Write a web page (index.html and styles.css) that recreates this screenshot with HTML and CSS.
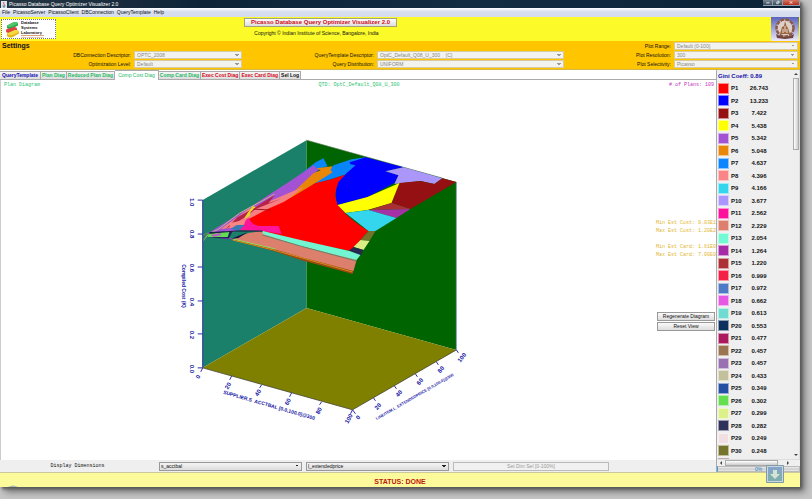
FILE: index.html
```
<!DOCTYPE html>
<html lang="en">
<head>
<meta charset="utf-8">
<title>Picasso Database Query Optimizer Visualizer 2.0</title>
<link rel="stylesheet" href="styles.css">
</head>
<body>
<div class="window">
  <header class="titlebar">
    <svg class="java" viewBox="0 0 6 7" aria-hidden="true"><path d="M0 0h6v7H0z" fill="#dfe5ec"/><path d="M3 1q-1 1 0 2t0 1.500" stroke="#d33" fill="none" stroke-width=".8"/><path d="M1.500 5h3M2 6h2" stroke="#357" stroke-width=".7"/></svg>
    <span class="title">Picasso Database Query Optimizer Visualizer 2.0</span>
    <div class="controls">
      <button aria-label="Minimize"><svg viewBox="0 0 9 6"><path d="M3 3.500h4" stroke="#fff"/></svg></button>
      <button aria-label="Restore"><svg viewBox="0 0 9 6"><path d="M3.500 2.500h2v2h-2zM4.500 1.500h2v2" stroke="#fff" fill="none" stroke-width=".8"/></svg></button>
      <button class="close" aria-label="Close"><svg viewBox="0 0 16 6"><path d="M6.500 1.500l3 3m0-3l-3 3" stroke="#fff"/></svg></button>
    </div>
  </header>
  <nav class="menu">
    <a href="#">File</a><a href="#">PicassoServer</a><a href="#">PicassoClient</a><a href="#">DBConnection</a><a href="#">QueryTemplate</a><a href="#">Help</a>
  </nav>
  <section class="banner">
    <div class="lab">
      <svg viewBox="0 0 15 18" aria-hidden="true">
        <path d="M2 5.500l7-3.500q4-.5 4 1.500v2L6 9q-4 .5-4-1.500z" fill="#2da84f"/><path d="M2 5.500l7-3.500q4-.5 4 1.500L6 7Q2 7.500 2 5.500" fill="#51c46c"/>
        <path d="M1 9.500l8-2.500q3 0 3 2v1L5 13q-4 0-4-2z" fill="#df4540"/>
        <path d="M2 13.500l8-3.500q4 0 4 2v1.500L7 17.500q-5 0-5-2z" fill="#e4b81d"/><path d="M2 13.500l8-3.500q4 0 4 2l-7 3q-5 0-5-1.500" fill="#f4da42"/>
      </svg>
      <div class="labname"><span>Database</span><span>Systems</span><span>Laboratory</span><small>Indian Institute of Science</small></div>
    </div>
    <div class="product">
      <button>Picasso Database Query Optimizer Visualizer 2.0</button>
      <p>Copyright © Indian Institute of Science, Bangalore, India</p>
    </div>
    <svg class="crest" viewBox="0 0 28 24" aria-hidden="true">
      <defs><linearGradient id="sky" x2="0" y2="1"><stop stop-color="#5964bd"/><stop offset="1" stop-color="#eee9fb"/></linearGradient></defs>
      <path d="M0 0h28v24H0z" fill="url(#sky)"/>
      <circle cx="14" cy="11" r="8.500" fill="#ddd0cb" stroke="#8b5b45" stroke-width="2.500" stroke-dasharray="4 1"/>
      <path d="M9 17l2-7 2-1 1-5 1.500 5 1.500 2 2 6z" fill="#9f6541"/><path d="M12 16v-4m2 3V9m2 7v-4" stroke="#ede0d5"/>
      <path d="M5 17l4 2 5 1 5-1 4-2-1 4-8 1-8-1z" fill="#704438"/>
    </svg>
  </section>
  <section class="settings">
    <h2>Settings</h2>
    <label class="c1 r2" for="db">DBConnection Descriptor:</label><select class="c2 r2" id="db" disabled><option>OPTC_2008</option></select>
    <label class="c1 r3" for="opt">Optimization Level:</label><select class="c2 r3" id="opt" disabled><option>Default</option></select>
    <label class="c3 r2" for="qt">QueryTemplate Descriptor:</label><select class="c4 r2" id="qt" disabled><option>OptC_Default_Q08_U_300 &nbsp;&nbsp; (C)</option></select>
    <label class="c3 r3" for="qd">Query Distribution:</label><select class="c4 r3" id="qd" disabled><option>UNIFORM</option></select>
    <label class="c5 r1" for="pr">Plot Range:</label><select class="c6 r1" id="pr" disabled><option>Default (0-100)</option></select>
    <label class="c5 r2" for="ps">Plot Resolution:</label><select class="c6 r2" id="ps" disabled><option>300</option></select>
    <label class="c5 r3" for="pl">Plot Selectivity:</label><select class="c6 r3" id="pl" disabled><option>Picasso</option></select>
  </section>
  <div class="main">
    <main class="work">
      <div class="tabs" role="tablist">
        <button class="blue" role="tab">QueryTemplate</button><button class="green" role="tab">Plan Diag</button><button class="green" role="tab">Reduced Plan Diag</button><button class="green active" role="tab" aria-selected="true">Comp Cost Diag</button><button class="green" role="tab">Comp Card Diag</button><button class="red" role="tab">Exec Cost Diag</button><button class="red" role="tab">Exec Card Diag</button><button role="tab">Sel Log</button>
      </div>
      <div class="canvas">
        <svg class="plot" viewBox="0 80 716 380" role="img" aria-label="Compilation cost diagram">
          <path d="M202 200L306 140V308L202 368z" fill="#1b8069"/>
          <path d="M306 140L456 182V350L306 308z" fill="#006400"/>
          <path d="M202 368L306 308 456 350 352 410z" fill="#808000"/>
          <path d="M306 140L442 178" stroke="#446a44" stroke-width=".6"/>
          <path d="M232 240L248 233 356 260 352 274 300 260 273 251z" fill="#9c4a10"/>
          <path d="M232 239L248 233 263 231 356 260 353 271 300 257 273 249z" fill="#dc7f6c"/>
          <path d="M232 240L273 250 352 272" stroke="#d68c18" fill="none"/>
          <path d="M228 238L275 249" stroke="#8fda60" fill="none"/>
          <path d="M206 234L262 199 290 181 313 165 320 168 293 192 260 212 234 232z" fill="#a452d4"/>
          <path d="M300 174L315 162 323 158 327 166 317 169 308 176 298 184z" fill="#0885f8"/>
          <path d="M313 180L329 170 333 165 351 159 366 157 355 167 346 174 315 184z" fill="#0885f8"/>
          <path d="M283 202L308 175 320 170 316 168 332 166 330 170 332 172 315 183 300 193z" fill="#e88607"/>
          <path d="M290 181L313 165 317 169 293 192 272 203 262 199z" fill="#a452d4"/>
          <path d="M220 229L248 209 260 205 293 191 303 187 283 203 253 219 240 227z" fill="#f58082"/>
          <path d="M246 220L267 209 283 202 315 183 331 179 346 174Q334 184 335 197 337 212 368 231L350 251 300 241 262 231 243 227z" fill="#f00"/>
          <path d="M248 218Q251 225 259 226L278 226 281 234 262 231 235 230Q246 226 244 220z" fill="#ff149c"/>
          <path d="M349 162L356 160 365 157 403 167 385 171 398 175 394 183 367 197 337 205Q333 194 338 182L346 173 355 165 350 164z" fill="#00f"/>
          <path d="M403 167L442 178 434 184 420 181 394 184 398 175 385 171z" fill="#ab96fa"/>
          <path d="M399 183L420 181 434 184 442 178 456 182 410 209 391 203z" fill="#951012"/>
          <path d="M337 205L367 197 399 183 391 203 367 210 345 213z" fill="#ff0"/>
          <path d="M391 203L410 209 368 210z" fill="#aa3034"/><path d="M368 210L410 209 396 218z" fill="#a631a6"/>
          <path d="M345 213L368 210 396 218 375 231 368 231z" fill="#33d6ec"/>
          <path d="M368 231L375 231 369 241 360 240z" fill="#74732c"/><path d="M360 240L369 241 363 250 353 247z" fill="#dbee85"/><path d="M353 247L363 250 360 256 348 251z" fill="#252a4d"/>
          <path d="M262 231L300 240 349 251 360 255 356 260 300 246 262 234z" fill="#72f5d1"/><path d="M262 235L300 246 356 261" stroke="#4f7d63" fill="none" stroke-width=".8"/>
          <path d="M202 241L208 234 218 229 239 213 274 194" stroke="#c1b487" fill="none"/>
          <path d="M225 229L237 217 250 210 274 195 268 203 280 199 255 209 245 217 233 224z" fill="#b52249"/>
          <path d="M229 223l15-3 6-7-7 11-14 3z" fill="#fa8585"/>
          <path d="M230 229l6-4 8 0-6 6z" fill="#3979b4"/>
          <path d="M247 213l5-7 3 1-5 5-1 4-6 3z" fill="#e3d72c"/><path d="M253 209L270 210" stroke="#9c1022"/>
          <path d="M209 232L232 231 228 239 207 237z" fill="#1c2357"/><path d="M208 234L229 231 227 237 207 237z" fill="#62dd54"/>
          <path d="M210 235l9-2 2 2-8 2z" fill="#ba61bd"/><path d="M230 239L247 232 238 238z" fill="#171643"/>
          <path d="M210 233l25-2 27 0" stroke="#171d3d" fill="none"/><path d="M220 238l12 1" stroke="#6930a8"/>
          <path d="M202 235l5-2-5 8" stroke="#608c52" fill="none"/>
          <path class="axis" d="M202 200V368M197 200h5M197 234h5M197 267h5M197 301h5M197 334h5M197 368h5M202 368L200 372M231 376L229 380M261 385L259 388M291 393L289 397M321 402L319 405M352 410L350 414"/>
          <path d="M202 368L352 410 456 350" stroke="#454537" fill="none" stroke-width=".8"/>
          <path d="M456 182V350" stroke="#829dc0" stroke-width=".8"/>
          <path class="axis" d="M352 410l3 4M373 398l2 3M394 386l2 3M415 374l2 3M436 362l2 3M456 350l2 3"/>
          <g class="ticks">
            <text transform="translate(189 202) rotate(90)">1.0</text><text transform="translate(189 234) rotate(90)">0.8</text><text transform="translate(189 268) rotate(90)">0.6</text><text transform="translate(189 302) rotate(90)">0.4</text><text transform="translate(189 335) rotate(90)">0.2</text><text transform="translate(189 369) rotate(90)">0.0</text>
            <text transform="translate(199 378) rotate(-60)">0</text><text transform="translate(229 387) rotate(-60)">20</text><text transform="translate(259 394) rotate(-60)">40</text><text transform="translate(289 403) rotate(-60)">60</text><text transform="translate(320 412) rotate(-60)">80</text><text transform="translate(350 420) rotate(-60)">100</text>
            <text transform="translate(359 419) rotate(-50)">0</text><text transform="translate(379 408) rotate(-50)">20</text><text transform="translate(400 395) rotate(-50)">40</text><text transform="translate(421 383) rotate(-50)">60</text><text transform="translate(442 371) rotate(-50)">80</text><text transform="translate(463 359) rotate(-50)">100</text>
          </g>
          <g class="names">
            <text transform="translate(181 286) rotate(90)">Compiled Cost (K)</text>
            <text transform="translate(268 407) rotate(16)">SUPPLIER.S_ACCTBAL [0.0,100.0]@300</text>
            <text class="long" transform="translate(415 398) rotate(-30)">LINEITEM.L_EXTENDEDPRICE [0.0,100.0]@300</text>
          </g>
        </svg>
        <div class="overlay">
          <div class="captions"><span class="cap">Plan Diagram</span><span class="cap mid">QTD: OptC_Default_Q08_U_300</span><span class="cap count"># of Plans: 109</span></div>
          <div class="costs"><span>Min Est Cost: 9.03E1</span><span>Max Est Cost: 1.20E2</span><span class="space">Min Est Card: 1.61E0</span><span>Max Est Card: 7.00E0</span></div>
          <div class="actions"><button>Regenerate Diagram</button><button>Reset View</button></div>
        </div>
      </div>
      <div class="dims">
        <span class="dimlabel">Display Dimensions</span>
        <select class="dim-a" aria-label="First dimension"><option>s_acctbal</option></select>
        <select class="dim-b" aria-label="Second dimension"><option>l_extendedprice</option></select>
        <button class="dim-c" disabled>Set Dim Sel [0-100%]</button>
        <span></span>
      </div>
    </main>
    <aside class="side">
      <div class="list">
        <div class="legend">
          <h3>Gini Coeff: 0.89</h3>
          <table><tbody>
            <tr><td><i style="background:#ff0000"></i></td><th>P1</th><td>26.743</td></tr>
            <tr><td><i style="background:#0000ff"></i></td><th>P2</th><td>13.233</td></tr>
            <tr><td><i style="background:#951012"></i></td><th>P3</th><td>7.422</td></tr>
            <tr><td><i style="background:#ffff00"></i></td><th>P4</th><td>5.438</td></tr>
            <tr><td><i style="background:#a452d4"></i></td><th>P5</th><td>5.342</td></tr>
            <tr><td><i style="background:#e88607"></i></td><th>P6</th><td>5.048</td></tr>
            <tr><td><i style="background:#0885ff"></i></td><th>P7</th><td>4.637</td></tr>
            <tr><td><i style="background:#fa8586"></i></td><th>P8</th><td>4.396</td></tr>
            <tr><td><i style="background:#33d6ec"></i></td><th>P9</th><td>4.166</td></tr>
            <tr><td><i style="background:#ab96ff"></i></td><th>P10</th><td>3.677</td></tr>
            <tr><td><i style="background:#ff109c"></i></td><th>P11</th><td>2.562</td></tr>
            <tr><td><i style="background:#dc7f6c"></i></td><th>P12</th><td>2.229</td></tr>
            <tr><td><i style="background:#73f9d4"></i></td><th>P13</th><td>2.054</td></tr>
            <tr><td><i style="background:#a62ba6"></i></td><th>P14</th><td>1.264</td></tr>
            <tr><td><i style="background:#ac3034"></i></td><th>P15</th><td>1.220</td></tr>
            <tr><td><i style="background:#f42045"></i></td><th>P16</th><td>0.999</td></tr>
            <tr><td><i style="background:#4e79c5"></i></td><th>P17</th><td>0.972</td></tr>
            <tr><td><i style="background:#e657e3"></i></td><th>P18</th><td>0.662</td></tr>
            <tr><td><i style="background:#70dbd0"></i></td><th>P19</th><td>0.613</td></tr>
            <tr><td><i style="background:#0d315d"></i></td><th>P20</th><td>0.553</td></tr>
            <tr><td><i style="background:#ac195d"></i></td><th>P21</th><td>0.477</td></tr>
            <tr><td><i style="background:#9b7451"></i></td><th>P22</th><td>0.457</td></tr>
            <tr><td><i style="background:#9970b0"></i></td><th>P23</th><td>0.457</td></tr>
            <tr><td><i style="background:#c3c19b"></i></td><th>P24</th><td>0.433</td></tr>
            <tr><td><i style="background:#2350a3"></i></td><th>P25</th><td>0.349</td></tr>
            <tr><td><i style="background:#65df50"></i></td><th>P26</th><td>0.302</td></tr>
            <tr><td><i style="background:#dcf18a"></i></td><th>P27</th><td>0.299</td></tr>
            <tr><td><i style="background:#2e315a"></i></td><th>P28</th><td>0.282</td></tr>
            <tr><td><i style="background:#f1dfe2"></i></td><th>P29</th><td>0.249</td></tr>
            <tr><td><i style="background:#74742c"></i></td><th>P30</th><td>0.248</td></tr>
            <tr><td><i style="background:#75494b"></i></td><th></th><td></td></tr>
          </tbody></table>
        </div>
        <div class="vbar"><i class="up"></i><b></b><i class="down"></i></div>
      </div>
      <div class="hbar"><i class="left"></i><b></b><i class="right"></i></div>
      <div class="progress">0%</div>
    </aside>
  </div>
  <footer class="status">STATUS: DONE
    <svg class="badge" viewBox="0 0 18 18" aria-hidden="true"><path d="M.5.500h17v17H.5z" fill="#c8d7df" stroke="#829aa5"/><path d="M2 2h14v14H2z" fill="#7fadaf"/><path d="M2 2h14v6H2z" fill="#84a4c8"/><path d="M7 5h4v4h3l-5 5-5-5h3z" fill="#d4e4d4"/></svg>
    <svg class="orb" viewBox="0 0 12 3" aria-hidden="true"><path d="M1 3Q6 0 11 3z" fill="#a8bdad"/></svg>
  </footer>
</div>
</body>
</html>
```
FILE: styles.css
```
* { box-sizing: border-box; }
body { margin: 0; height: 100vh; padding: 0 12px 12px 0; background: #c6c6c6; display: flex; font: 5px/7px "Liberation Sans", Arial, sans-serif; color: #111; overflow: hidden; }
button, select { font: inherit; color: inherit; margin: 0; padding: 0; border: 0; border-radius: 0; appearance: none; }
h2, h3, p { margin: 0; }
.window { flex: 1; min-width: 0; min-height: 0; display: flex; flex-direction: column; background: #fff; box-shadow: 2px 2px 3px #555, 5px 5px 7px #777; }

.titlebar { height: 8px; flex: none; display: flex; align-items: center; gap: 2px; padding-left: 1px; color: #fff; background: linear-gradient(90deg, #283744, #0d2438 25%, #122c42 60%, #0b2236); }
.java { width: 6px; height: 7px; }
.controls { margin-left: auto; display: flex; align-self: flex-start; }
.controls button { width: 10px; height: 6px; background: linear-gradient(#7b8996, #35485a); border: solid #92a0ab; border-width: 0 1px 1px 0; display: flex; }
.controls svg { width: 100%; height: 100%; }
.controls .close { width: 17px; background: linear-gradient(#d17866, #b92a18); }
.menu { height: 9px; flex: none; display: flex; align-items: center; gap: 3px; padding-left: 2px; background: linear-gradient(#fff, #d8e0f0 40%, #d3dbed); }
.menu a { color: #111; text-decoration: none; }

.banner { height: 24px; flex: none; display: grid; grid-template-columns: 243fr 153px 374fr 28px; padding: 0 1px; background: #fcfa28; }
.lab { width: 55px; height: 20px; margin-top: 2px; display: flex; gap: 1px; padding: 0 1px 0 3px; background: #fff; border: 1px dotted #777; }
.lab svg { width: 15px; height: 18px; flex: none; }
.labname { display: flex; flex-direction: column; font-size: 4px; font-weight: bold; line-height: 5px; color: #111; white-space: nowrap; }
.labname small { font-size: 2px; font-weight: normal; color: #b56439; border-top: 1px solid #d7a47e; line-height: 2px; }
.product { grid-column: 2; display: flex; flex-direction: column; align-items: center; gap: 3px; white-space: nowrap; padding-top: 1px; }
.product button { width: 100%; height: 9px; font-weight: bold; font-size: 6px; color: #d00c22; background: linear-gradient(#fff, #ddd); border: 1px solid #a2a27b; }
.product p { padding-right: 8px; }
.crest { grid-column: 4; width: 28px; height: 24px; }

.settings { height: 29px; flex: none; display: grid; grid-template-columns: 134fr 108fr 135fr 187fr 110fr 124fr; grid-template-rows: repeat(3, 9px); padding-right: 2px; background: #ffc600; border-bottom: 1px solid #d7b64a; }
.settings h2 { grid-area: 1 / 1; font-size: 7px; line-height: 9px; padding-left: 2px; color: #111; }
.settings label { text-align: right; padding-right: 3px; line-height: 11px; }
.settings select { margin-top: 1px; padding: 0 2px; color: #888; opacity: 1; background: #f2f2ee; border: 1px solid #d8cba0; min-width: 0; background-image: linear-gradient(45deg, transparent 50%, #999 50%), linear-gradient(-45deg, transparent 50%, #999 50%); background-size: 2px 2px; background-position: right 4px center, right 2px center; background-repeat: no-repeat; }
.c1 { grid-column: 1; } .c2 { grid-column: 2; } .c3 { grid-column: 3; } .c4 { grid-column: 4; } .c5 { grid-column: 5; } .c6 { grid-column: 6; }
.r1 { grid-row: 1; } .r2 { grid-row: 2; } .r3 { grid-row: 3; }

.main { flex: 1; min-height: 0; display: flex; border-bottom: 1px solid #c9c99c; }
.work { flex: 1; min-width: 0; min-height: 0; display: flex; flex-direction: column; }
.tabs { height: 10px; flex: none; display: flex; align-items: flex-end; border-bottom: 1px solid #aaa; }
.tabs button { height: 8px; padding: 0 1px; font-weight: bold; background: linear-gradient(#f6f6f6, #ddd); border: 1px solid #aaa; border-width: 1px 1px 0 0; }
.tabs .active { height: 10px; margin-bottom: -1px; font-weight: normal; background: #fff; padding: 0 3px; }
.tabs .blue { color: #1712b0; padding: 0 2px; } .tabs .green { color: #28b968; } .tabs .red { color: #d40a23; }
.canvas { flex: 1; min-height: 0; display: grid; grid-template: minmax(0, 1fr) / minmax(0, 1fr); border-left: 1px solid #ccc; }
.plot { grid-area: 1 / 1; width: 100%; height: 100%; }
.axis { stroke: #2c2caa; fill: none; stroke-width: 1; }
.ticks, .names { fill: #1212a4; text-anchor: middle; font-weight: bold; }
.ticks { font-size: 6px; } .names { font-size: 5px; } .long { font-size: 4px; }
.overlay { grid-area: 1 / 1; display: grid; grid-template-rows: 137px 94px auto; font-family: "Liberation Mono", monospace; }
.captions { display: grid; grid-template-columns: 1fr auto 1fr; align-items: start; padding: 2px 2px 0 3px; color: #2bbf70; }
.count { color: #c030bd; text-align: right; }
.costs { display: flex; flex-direction: column; align-items: flex-end; line-height: 8px; color: #dfb52d; padding-top: 2px; }
.costs .space { margin-top: 8px; }
.actions { display: flex; flex-direction: column; align-items: flex-end; gap: 1px; padding: 1px 1px 0 0; }
.actions button { width: 58px; height: 9px; font-family: "Liberation Sans", sans-serif; background: linear-gradient(#fafafa, #ddd); border: 1px solid #999; }
.dims { height: 12px; flex: none; display: grid; grid-template-columns: 155fr 143fr 143fr 156fr 103fr; column-gap: 4px; align-items: center; background: #efefef; }
.dimlabel { text-align: center; font-family: "Liberation Mono", monospace; }
.dims select { height: 9px; padding: 0 1px; min-width: 0; border: 1px solid #999; background: linear-gradient(45deg, transparent 50%, #222 50%) right 4px center / 2px 2px no-repeat, linear-gradient(-45deg, transparent 50%, #222 50%) right 2px center / 2px 2px no-repeat, linear-gradient(#f4f4f4, #ddd); }
.dims button { height: 9px; color: #999; background: #f1f1f1; border: 1px solid #bbb; }

.side { width: 84px; min-height: 0; display: flex; flex-direction: column; background: #efefef; border-left: 1px solid #aaa; }
.list { flex: 1; min-height: 0; display: flex; }
.legend { flex: 1; overflow: hidden; padding-left: 1px; font-size: 6px; font-weight: bold; color: #111; }
.legend h3 { font-size: 6px; line-height: 12px; color: #1712a8; }
.legend table { border-collapse: collapse; }
.legend tr { height: 12px; } .legend tr:nth-child(even) { height: 13px; }
.legend td, .legend th { padding: 0; line-height: 12px; text-align: left; }
.legend th { width: 16px; } .legend td:first-child { width: 13px; } .legend td:last-child { width: 24px; text-align: center; }
.legend i { display: block; width: 11px; height: 11px; border: 1px solid #fff8; }
.vbar { width: 7px; display: flex; flex-direction: column; align-items: center; background: #eee; border-right: 1px solid #ddd; }
.vbar b { width: 6px; height: 72px; background: linear-gradient(90deg, #fff, #ccc); border: 1px solid #aaa; }
.vbar i { height: 8px; display: flex; } .vbar .down { margin-top: auto; }
.vbar i::before, .hbar i::before { content: ""; margin: auto; border: 2px solid transparent; }
.vbar .up::before { border-bottom-color: #444; border-top: 0; } .vbar .down::before { border-top-color: #444; border-bottom: 0; }
.hbar { height: 7px; flex: none; display: flex; align-items: center; border-top: 1px solid #ddd; padding-right: 8px; }
.hbar b { flex: 1; height: 6px; margin-right: 6px; background: linear-gradient(#fff, #ccc); border: 1px solid #aaa; }
.hbar i { width: 8px; display: flex; }
.hbar .left::before { border-right-color: #444; border-left: 0; } .hbar .right::before { border-left-color: #444; border-right: 0; }
.progress { height: 6px; flex: none; line-height: 5px; text-align: center; color: #287fc4; background: linear-gradient(#eee, #ccc 50%, #e8e8e8); border: 1px solid #bbb; border-left: 1px solid #399be8; }
.status { position: relative; height: 14px; flex: none; line-height: 18px; text-align: center; font-size: 7px; font-weight: bold; color: #bd170f; background: #fcfa9b; }
.badge { position: absolute; right: 16px; top: -8px; width: 18px; height: 18px; }
.orb { position: absolute; left: 7px; bottom: 0; width: 12px; height: 3px; }
```
